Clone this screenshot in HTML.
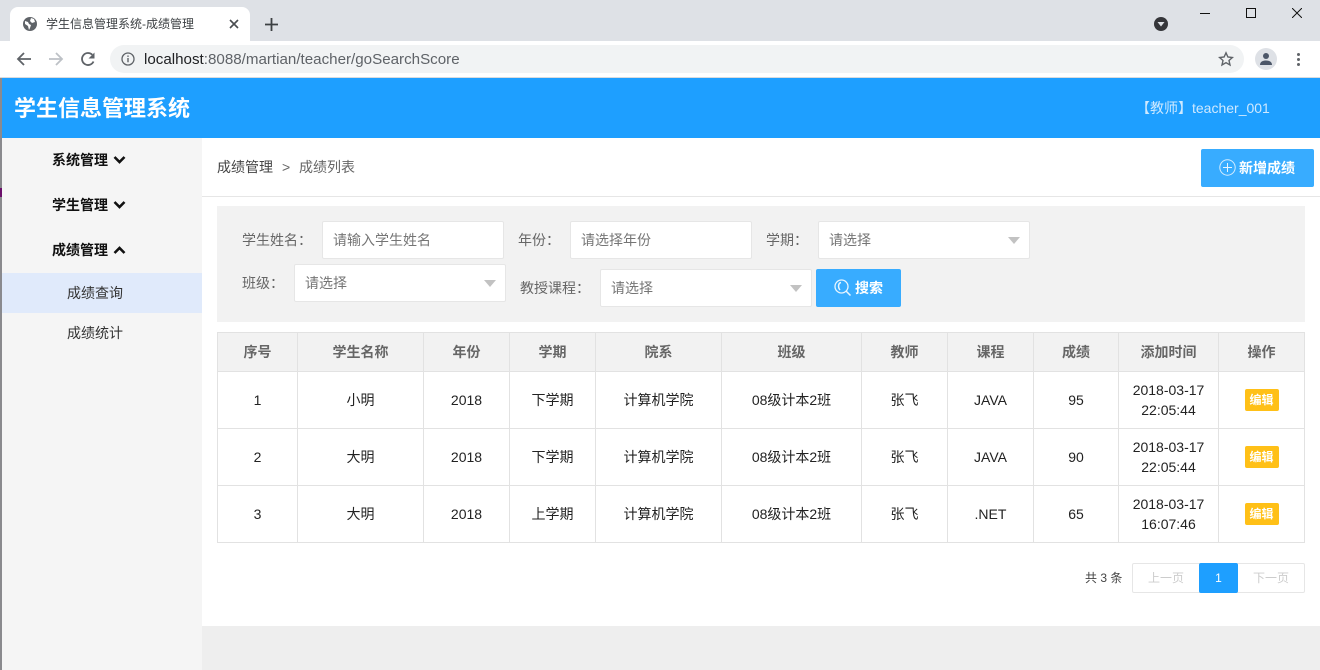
<!DOCTYPE html>
<html lang="zh"><head><meta charset="utf-8"><title>学生信息管理系统-成绩管理</title>
<style>
*{box-sizing:border-box}
html,body{margin:0;padding:0;width:1320px;height:670px;overflow:hidden;background:#fff;font-family:"Liberation Sans","Noto Sans CJK SC",sans-serif;font-size:14px;color:#333}
.a{position:absolute;white-space:nowrap}
.box{position:absolute;background:#fff;border:1px solid #e6e6e6;border-radius:2px;height:38px;line-height:36px;padding-left:10px;color:#757575}
.lb{position:absolute;color:#666;white-space:nowrap;line-height:20px}
.tri{position:absolute;width:0;height:0;border:6px solid transparent;border-top:7px solid #c2c2c2;border-bottom:0}
table{position:absolute;left:217px;top:332px;width:1087px;border-collapse:collapse;table-layout:fixed;font-size:14px;color:#222}
td,th{border:1px solid #e2e2e2;text-align:center;padding:0;line-height:20px}
th{background:#f2f2f2;color:#666;height:39px;font-weight:700}
td{height:57px}
.ed{display:inline-block;width:34px;height:22px;line-height:22px;background:#ffc017;color:#fff;border-radius:2px;font-size:12px;font-weight:700;vertical-align:middle}
.nav{position:absolute;left:52px;font-weight:700;color:#111;line-height:20px;white-space:nowrap}
.nav svg{position:absolute;left:61px;top:5px}
</style></head><body>

<div class="a" style="left:0;top:0;width:1320px;height:41px;background:#dee1e6"></div>
<div class="a" style="left:10px;top:7px;width:240px;height:34px;background:#fff;border-radius:8px 8px 0 0"></div>
<svg class="a" style="left:23px;top:17px" width="14" height="14" viewBox="0 0 14 14"><circle cx="7" cy="7" r="7" fill="#5f6368"/><path d="M2 4l3 1 1 2 2 1-1 3-1 2-1-4-3-2zM8 1l3 1 1 3-3 1-2-2z" fill="#fff"/></svg>
<div class="a" style="left:46px;top:16px;font-size:12px;line-height:17px;color:#3c4043">学生信息管理系统-成绩管理</div>
<svg class="a" style="left:229px;top:19px" width="10" height="10" viewBox="0 0 10 10"><path d="M1 1l8 8M9 1l-8 8" stroke="#4a4d51" stroke-width="1.6"/></svg>
<svg class="a" style="left:265px;top:18px" width="13" height="13" viewBox="0 0 13 13"><path d="M6.500 0v13M0 6.500h13" stroke="#3c4043" stroke-width="1.800"/></svg>

<svg class="a" style="left:1154px;top:17px" width="14" height="14" viewBox="0 0 14 14"><circle cx="7" cy="7" r="7" fill="#35363a"/><path d="M3.500 5h7L7 9.500z" fill="#dee1e6"/></svg>
<div class="a" style="left:1200px;top:13px;width:10px;height:1px;background:#111"></div>
<div class="a" style="left:1246px;top:8px;width:10px;height:10px;border:1px solid #111"></div>
<svg class="a" style="left:1292px;top:8px" width="10" height="10" viewBox="0 0 10 10"><path d="M0 0l10 10M10 0L0 10" stroke="#111" stroke-width="1"/></svg>

<div class="a" style="left:0;top:41px;width:1320px;height:37px;background:#fff"></div>
<svg class="a" style="left:16px;top:51px" width="16" height="16" viewBox="0 0 16 16"><path d="M15 8H2M8 2L2 8l6 6" fill="none" stroke="#5f6368" stroke-width="1.800"/></svg>
<svg class="a" style="left:48px;top:51px" width="16" height="16" viewBox="0 0 16 16"><path d="M1 8h13M8 2l6 6-6 6" fill="none" stroke="#bdc1c6" stroke-width="1.800"/></svg>
<svg class="a" style="left:80px;top:51px" width="16" height="16" viewBox="0 0 16 16"><path d="M13.500 10.500A6 6 0 1 1 12.300 3.800" fill="none" stroke="#5f6368" stroke-width="1.800"/><path d="M14.500 1.500v6h-6z" fill="#5f6368"/></svg>
<div class="a" style="left:110px;top:45px;width:1134px;height:28px;background:#f1f3f4;border-radius:14px"></div>
<svg class="a" style="left:121px;top:52px" width="14" height="14" viewBox="0 0 14 14"><circle cx="7" cy="7" r="6" fill="none" stroke="#5f6368" stroke-width="1.300"/><path d="M7 6v4.200M7 3.500v1.400" stroke="#5f6368" stroke-width="1.400"/></svg>
<div class="a" style="left:144px;top:51px;font-size:15.150px;line-height:18px;color:#5f6368"><span style="color:#202124">localhost</span>:8088/martian/teacher/goSearchScore</div>
<svg class="a" style="left:1218px;top:51px" width="16" height="16" viewBox="0 0 16 16"><path d="M8 1.800l1.900 4.200 4.500.5-3.400 3 1 4.500L8 11.700 4 14l1-4.500-3.400-3 4.500-.5z" fill="none" stroke="#5f6368" stroke-width="1.400"/></svg>
<div class="a" style="left:1255px;top:48px;width:22px;height:22px;border-radius:50%;background:#dee1e6"></div>
<svg class="a" style="left:1259px;top:52px" width="14" height="14" viewBox="0 0 14 14"><circle cx="7" cy="4" r="3" fill="#4c5668"/><path d="M1 13c0-3.500 3-4.500 6-4.500s6 1 6 4.500z" fill="#4c5668"/></svg>
<div class="a" style="left:1297px;top:53px;width:3px;height:3px;border-radius:50%;background:#5f6368"></div>
<div class="a" style="left:1297px;top:58px;width:3px;height:3px;border-radius:50%;background:#5f6368"></div>
<div class="a" style="left:1297px;top:63px;width:3px;height:3px;border-radius:50%;background:#5f6368"></div>
<div class="a" style="left:0;top:77px;width:1320px;height:1px;background:#d9dbde"></div>

<div class="a" style="left:0;top:78px;width:2px;height:592px;background:#8a8a8e"></div>
<div class="a" style="left:0;top:188px;width:2px;height:9px;background:#6b0f6b"></div>
<div class="a" style="left:2px;top:78px;width:1318px;height:60px;background:#1e9fff"></div>
<div class="a" style="left:14px;top:95px;font-size:22px;line-height:28px;font-weight:700;color:#fff">学生信息管理系统</div>
<div class="a" style="left:1136px;top:98px;font-size:14px;line-height:20px;color:#cfe9ff">【教师】teacher_001</div>

<div class="a" style="left:2px;top:138px;width:200px;height:532px;background:#f5f5f5"></div>
<div class="a" style="left:2px;top:273px;width:200px;height:40px;background:#e0eafb"></div>
<div class="nav" style="top:150px">系统管理<svg width="13" height="10" viewBox="0 0 13 10"><path d="M1.500 2l5 5 5-5" fill="none" stroke="#111" stroke-width="2.600"/></svg></div>
<div class="nav" style="top:195px">学生管理<svg width="13" height="10" viewBox="0 0 13 10"><path d="M1.500 2l5 5 5-5" fill="none" stroke="#111" stroke-width="2.600"/></svg></div>
<div class="nav" style="top:240px">成绩管理<svg width="13" height="10" viewBox="0 0 13 10"><path d="M1.500 8l5-5 5 5" fill="none" stroke="#111" stroke-width="2.600"/></svg></div>
<div class="a" style="left:67px;top:283px;line-height:20px;color:#333">成绩查询</div>
<div class="a" style="left:67px;top:323px;line-height:20px;color:#333">成绩统计</div>

<div class="a" style="left:202px;top:626px;width:1118px;height:44px;background:#eee"></div>
<div class="a" style="left:202px;top:196px;width:1118px;height:1px;background:#e6e6e6"></div>
<div class="a" style="left:217px;top:157px;line-height:20px;color:#444">成绩管理</div>
<div class="a" style="left:282px;top:157px;line-height:20px;color:#666">&gt;</div>
<div class="a" style="left:299px;top:157px;line-height:20px;color:#666">成绩列表</div>
<div class="a" style="left:1201px;top:149px;width:113px;height:38px;background:#38acff;border-radius:2px"></div>
<svg class="a" style="left:1219px;top:159px" width="17" height="17" viewBox="0 0 17 17"><circle cx="8.500" cy="8.500" r="7.700" fill="none" stroke="#d5edff" stroke-width="1"/><path d="M8.500 4v9M4 8.500h9" stroke="#e8f5ff" stroke-width="1"/></svg>
<div class="a" style="left:1239px;top:158px;line-height:20px;color:#fff;font-weight:700">新增成绩</div>

<div class="a" style="left:217px;top:206px;width:1088px;height:116px;background:#f2f2f2"></div>
<div class="lb" style="left:242px;top:230px">学生姓名：</div>
<div class="box" style="left:322px;top:221px;width:182px">请输入学生姓名</div>
<div class="lb" style="left:518px;top:230px">年份：</div>
<div class="box" style="left:570px;top:221px;width:182px">请选择年份</div>
<div class="lb" style="left:766px;top:230px">学期：</div>
<div class="box" style="left:818px;top:221px;width:212px">请选择</div>
<div class="tri" style="left:1008px;top:237px"></div>
<div class="lb" style="left:242px;top:273px">班级：</div>
<div class="box" style="left:294px;top:264px;width:212px">请选择</div>
<div class="tri" style="left:484px;top:280px"></div>
<div class="lb" style="left:520px;top:278px">教授课程：</div>
<div class="box" style="left:600px;top:269px;width:212px">请选择</div>
<div class="tri" style="left:790px;top:285px"></div>
<div class="a" style="left:816px;top:269px;width:85px;height:38px;background:#38acff;border-radius:2px"></div>
<svg class="a" style="left:834px;top:279px" width="18" height="18" viewBox="0 0 18 18"><circle cx="7.500" cy="7.500" r="6.500" fill="none" stroke="#e8f5ff" stroke-width="1.300"/><path d="M7 3.500C4.500 4 3.500 8 6 11M12 12l4.500 4.500" fill="none" stroke="#e8f5ff" stroke-width="1.500"/></svg>
<div class="a" style="left:855px;top:278px;line-height:20px;color:#fff;font-weight:700">搜索</div>

<table>
<colgroup><col style="width:80px"><col style="width:126px"><col style="width:86px"><col style="width:86px"><col style="width:126px"><col style="width:140px"><col style="width:86px"><col style="width:86px"><col style="width:85px"><col style="width:100px"><col style="width:86px"></colgroup>
<tr><th>序号</th><th>学生名称</th><th>年份</th><th>学期</th><th>院系</th><th>班级</th><th>教师</th><th>课程</th><th>成绩</th><th>添加时间</th><th>操作</th></tr>
<tr><td>1</td><td>小明</td><td>2018</td><td>下学期</td><td>计算机学院</td><td>08级计本2班</td><td>张飞</td><td>JAVA</td><td>95</td><td>2018-03-17<br>22:05:44</td><td><span class="ed">编辑</span></td></tr>
<tr><td>2</td><td>大明</td><td>2018</td><td>下学期</td><td>计算机学院</td><td>08级计本2班</td><td>张飞</td><td>JAVA</td><td>90</td><td>2018-03-17<br>22:05:44</td><td><span class="ed">编辑</span></td></tr>
<tr><td>3</td><td>大明</td><td>2018</td><td>上学期</td><td>计算机学院</td><td>08级计本2班</td><td>张飞</td><td>.NET</td><td>65</td><td>2018-03-17<br>16:07:46</td><td><span class="ed">编辑</span></td></tr>
</table>

<div class="a" style="left:1085px;top:569px;font-size:12px;line-height:18px;color:#444">共 3 条</div>
<div class="a" style="left:1132px;top:563px;width:173px;height:30px;border:1px solid #e6e6e6;background:#fff;border-radius:2px"></div>
<div class="a" style="left:1148px;top:569px;font-size:12px;line-height:18px;color:#ccc">上一页</div>
<div class="a" style="left:1199px;top:563px;width:39px;height:30px;background:#1e9fff;border-radius:2px;color:#fff;font-size:12px;text-align:center;line-height:30px">1</div>
<div class="a" style="left:1253px;top:569px;font-size:12px;line-height:18px;color:#ccc">下一页</div>
</body></html>
